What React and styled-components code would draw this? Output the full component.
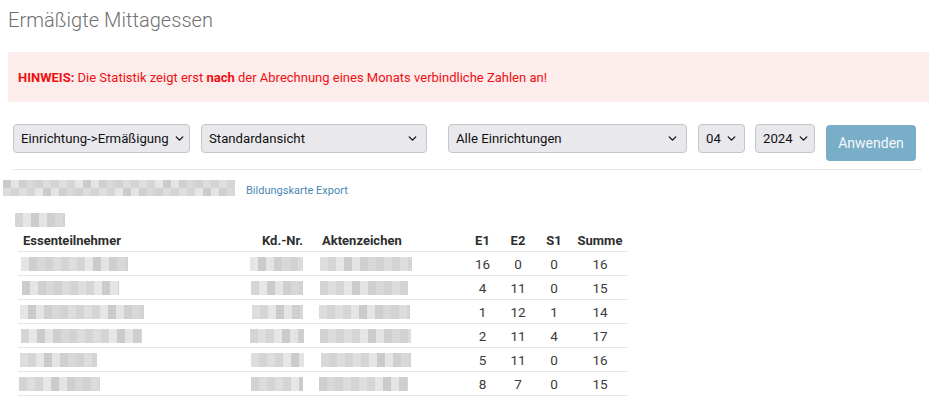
import styled, { createGlobalStyle } from "styled-components";
import { ChevronDown } from "lucide-react";

const GlobalStyle = createGlobalStyle`
  html, body {
    margin: 0;
    padding: 0;
    background: #fff;
    font-family: Roboto, "Liberation Sans", sans-serif;
    overflow: hidden;
  }
`;

const Page = styled.div`
  width: 929px;
  padding-left: 8px;
  box-sizing: border-box;
`;

const Title = styled.h1`
  margin: 0;
  padding-top: 8px;
  height: 52px;
  box-sizing: border-box;
  font-size: 20px;
  font-weight: 300;
  color: #707070;
  letter-spacing: 0.05px;
`;

const Alert = styled.div`
  background: #fdecec;
  height: 50px;
  padding: 0 10px;
  display: flex;
  align-items: center;
  font-size: 13px;
  color: #f01010;
  strong {
    font-weight: 700;
  }
`;

const Filters = styled.div`
  display: flex;
  align-items: flex-start;
  padding: 22px 0 0 5px;
  height: 67px;
  box-sizing: border-box;
`;

const SelectBox = styled.div`
  width: ${({ $w }) => $w}px;
  height: 29px;
  margin-right: ${({ $gap }) => $gap}px;
  box-sizing: border-box;
  background: #e9e9ed;
  border: 1px solid #c6c6ca;
  border-radius: 4px;
  display: flex;
  align-items: center;
  justify-content: space-between;
  padding: 0 7px 0 7px;
  font-size: 13.2px;
  color: #111;
  white-space: nowrap;
  overflow: hidden;
  svg {
    flex-shrink: 0;
    margin-left: 4px;
  }
`;

const Button = styled.button`
  margin-top: 1px;
  width: 90px;
  height: 36px;
  border: none;
  border-radius: 4px;
  background: #79aec8;
  color: #f4f8fb;
  font-family: inherit;
  font-size: 14px;
`;

const Rule = styled.div`
  margin-left: 5px;
  width: 909px;
  border-top: 1px solid #e8e8e8;
`;

const ExportRow = styled.div`
  display: flex;
  align-items: flex-end;
  margin: 10px 0 0 -5px;
  height: 16px;
`;

const ExportLink = styled.a`
  margin-left: 11px;
  font-size: 11px;
  line-height: 11px;
  color: #4a88b3;
  text-decoration: none;
`;

const Pixels = styled.div`
  display: inline-flex;
  flex-direction: column;
  vertical-align: middle;
`;

const PixelRow = styled.div`
  display: flex;
`;

const Pixel = styled.span`
  width: ${({ $w }) => $w}px;
  height: ${({ $h }) => $h}px;
  background: ${({ $c }) => $c};
`;

const GroupLabel = styled.div`
  margin: 13px 0 0 7px;
  height: 20px;
`;

const Table = styled.table`
  margin-left: 10px;
  border-collapse: collapse;
  table-layout: fixed;
  width: 610px;
  font-size: 13px;
  color: #3a3a3a;
  th {
    font-weight: 700;
    color: #2e2e2e;
    height: 22px;
    padding: 0;
    vertical-align: middle;
  }
  td {
    height: 23px;
    border-top: 1px solid #e6e6e6;
    padding: 0;
    vertical-align: middle;
    line-height: 0;
  }
  tr:last-child td {
    border-bottom: 1px solid #e6e6e6;
  }
`;

const Th = styled.th`
  text-align: ${({ $align }) => $align || "center"};
  padding-left: ${({ $pl }) => $pl || 0}px !important;
  padding-right: ${({ $pr }) => $pr || 0}px !important;
`;

const NumCell = styled.td`
  text-align: center;
  font-size: 13.5px;
  line-height: normal !important;
`;

const BlurCell = styled.td`
  text-align: ${({ $align }) => $align || "left"};
  padding-left: ${({ $pl }) => $pl || 0}px !important;
  padding-right: ${({ $pr }) => $pr || 0}px !important;
`;

const greys = ["#e4e4e4", "#d5d5d7", "#dcdcdc", "#cfcfd1", "#e7e5e5", "#d2d4d8", "#d9d8d6", "#cbcbcd", "#dedede", "#d4d2d0"];

const Redacted = ({ w, h = 14, cell = 8, rows = 1, seed = 0 }) => {
  const n = Math.ceil(w / cell);
  return (
    <Pixels>
      {Array.from({ length: rows }).map((_, r) => (
        <PixelRow key={r}>
          {Array.from({ length: n }).map((__, i) => (
            <Pixel
              key={i}
              $w={i === n - 1 ? w - cell * (n - 1) : cell}
              $h={h / rows}
              $c={greys[(i * 3 + r * 5 + seed * 7) % greys.length]}
            />
          ))}
        </PixelRow>
      ))}
    </Pixels>
  );
};

const rows = [
  { name: 107, nl: 3, kd: 53, kr: 7, akt: 92, al: 10, e1: 16, e2: 0, s1: 0, sum: 16 },
  { name: 97, nl: 4, kd: 52, kr: 7, akt: 88, al: 10, e1: 4, e2: 11, s1: 0, sum: 15 },
  { name: 124, nl: 2, kd: 51, kr: 7, akt: 91, al: 9, e1: 1, e2: 12, s1: 1, sum: 14 },
  { name: 121, nl: 3, kd: 54, kr: 6, akt: 91, al: 10, e1: 2, e2: 11, s1: 4, sum: 17 },
  { name: 77, nl: 2, kd: 53, kr: 6, akt: 90, al: 11, e1: 5, e2: 11, s1: 0, sum: 16 },
  { name: 81, nl: 1, kd: 52, kr: 7, akt: 89, al: 9, e1: 8, e2: 7, s1: 0, sum: 15 },
];

export default function App() {
  return (
    <>
      <GlobalStyle />
      <Page>
        <Title>Ermäßigte Mittagessen</Title>
        <Alert>
          <span>
            <strong>HINWEIS:</strong> Die Statistik zeigt erst <strong>nach</strong> der Abrechnung eines Monats
            verbindliche Zahlen an!
          </span>
        </Alert>
        <Filters>
          <SelectBox $w={177} $gap={11}>
            Einrichtung-&gt;Ermäßigung <ChevronDown size={13} strokeWidth={2.5} />
          </SelectBox>
          <SelectBox $w={226} $gap={21}>
            Standardansicht <ChevronDown size={13} strokeWidth={2.5} />
          </SelectBox>
          <SelectBox $w={239} $gap={11}>
            Alle Einrichtungen <ChevronDown size={13} strokeWidth={2.5} />
          </SelectBox>
          <SelectBox $w={47} $gap={10}>
            04 <ChevronDown size={13} strokeWidth={2.5} />
          </SelectBox>
          <SelectBox $w={60} $gap={11}>
            2024 <ChevronDown size={13} strokeWidth={2.5} />
          </SelectBox>
          <Button>Anwenden</Button>
        </Filters>
        <Rule />
        <ExportRow>
          <Redacted w={232} h={16} rows={2} seed={1} />
          <ExportLink href="#">Bildungskarte Export</ExportLink>
        </ExportRow>
        <GroupLabel>
          <Redacted w={50} h={14} cell={8} seed={3} />
        </GroupLabel>
        <Table>
          <colgroup>
            <col style={{ width: 230 }} />
            <col style={{ width: 62 }} />
            <col style={{ width: 155 }} />
            <col style={{ width: 35 }} />
            <col style={{ width: 36 }} />
            <col style={{ width: 36 }} />
            <col style={{ width: 56 }} />
          </colgroup>
          <thead>
            <tr>
              <Th $align="left" $pl={5}>Essenteilnehmer</Th>
              <Th $align="right" $pr={7}>Kd.-Nr.</Th>
              <Th $align="left" $pl={12}>Aktenzeichen</Th>
              <Th>E1</Th>
              <Th>E2</Th>
              <Th>S1</Th>
              <Th>Summe</Th>
            </tr>
          </thead>
          <tbody>
            {rows.map((r, i) => (
              <tr key={i}>
                <BlurCell $pl={r.nl}>
                  <Redacted w={r.name} seed={i} />
                </BlurCell>
                <BlurCell $align="right" $pr={r.kr}>
                  <Redacted w={r.kd} seed={i + 2} />
                </BlurCell>
                <BlurCell $pl={r.al}>
                  <Redacted w={r.akt} seed={i + 4} />
                </BlurCell>
                <NumCell>{r.e1}</NumCell>
                <NumCell>{r.e2}</NumCell>
                <NumCell>{r.s1}</NumCell>
                <NumCell>{r.sum}</NumCell>
              </tr>
            ))}
          </tbody>
        </Table>
      </Page>
    </>
  );
}
